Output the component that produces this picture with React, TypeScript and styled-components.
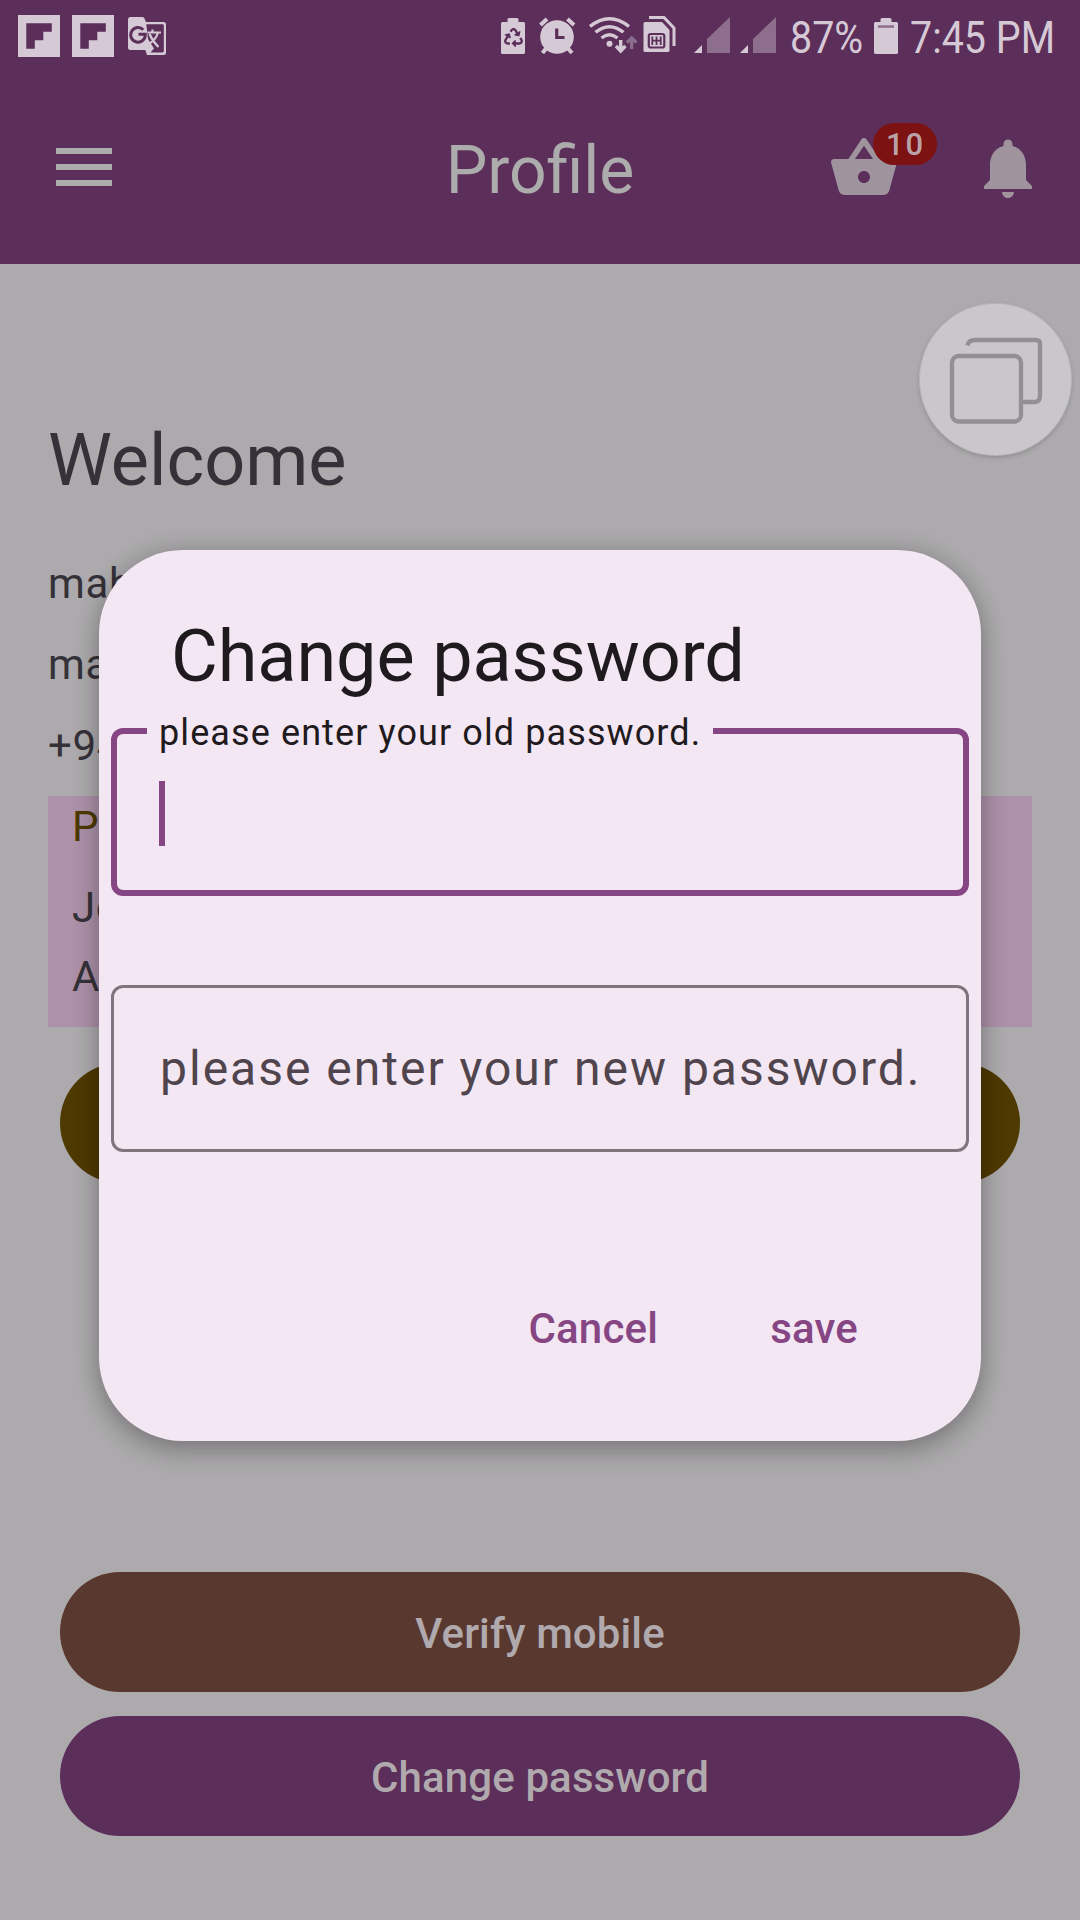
import React from 'react';
import styled, { createGlobalStyle } from 'styled-components';
import { FaRecycle } from 'react-icons/fa';

const color = {
  bar: '#5c2e5a',
  page: '#acaaac',
  status: '#d6c9d6',
  faint: '#8e6e8d',
  icon: '#9f949e',
  ink: '#353138',
  primary: '#864583',
  dialog: '#f3e7f3',
};

const Global = createGlobalStyle`
  * { box-sizing: border-box; }
  body { margin: 0; background: ${color.page}; font-family: Roboto, 'Liberation Sans', sans-serif; }
  button { font-family: inherit; }
`;

const Screen = styled.div`
  position: relative;
  display: flex;
  flex-direction: column;
  width: 1080px;
  height: 1920px;
  overflow: hidden;
  background: ${color.page};
`;

const Header = styled.header`
  height: 264px;
  flex: none;
  background: ${color.bar};
`;

const StatusBar = styled.div`
  display: flex;
  justify-content: space-between;
  height: 72px;
  padding: 0 18px;
  color: ${color.status};
`;

const StatusGroup = styled.div`
  display: flex;
  align-items: flex-start;
`;

const Glyph = styled.svg<{ $before?: number }>`
  display: block;
  flex: none;
  height: 72px;
  margin-left: ${(p) => p.$before ?? 0}px;
`;

const StatusText = styled.span<{ $width: number; $before: number }>`
  width: ${(p) => p.$width}px;
  margin-left: ${(p) => p.$before}px;
  font-size: 45px;
  line-height: 75px;
  white-space: nowrap;
  transform: scaleX(0.876);
  transform-origin: left;
`;

const RecycleBattery = styled.div`
  display: grid;
  place-items: center;
  width: 24px;
  height: 72px;
  & > * { grid-area: 1 / 1; }
  & > .mark { color: ${color.bar}; margin-top: 3px; }
`;

const Toolbar = styled.div`
  display: grid;
  grid-template-columns: 1fr auto 1fr;
  align-items: center;
  height: 192px;
  padding: 0 36px 0 56px;
`;

const MenuButton = styled.div`
  display: flex;
  flex-direction: column;
  gap: 10px;
  width: 56px;
  margin-bottom: 2px;
`;

const MenuLine = styled.span`
  height: 6px;
  background: #acacac;
`;

const Title = styled.h1`
  margin: 6px 0 0 -20px;
  font-size: 66px;
  font-weight: 400;
  line-height: 84px;
  color: #acacac;
`;

const Actions = styled.div`
  display: flex;
  justify-content: flex-end;
  gap: 72px;
`;

const IconWrap = styled.div`
  position: relative;
  width: 72px;
  height: 72px;
`;

const Icon = styled.svg`
  display: block;
  width: 72px;
  height: 72px;
  fill: ${color.icon};
`;

const Badge = styled.span`
  position: absolute;
  left: 45px;
  top: -9px;
  width: 64px;
  height: 42px;
  border-radius: 21px;
  background: #7d1212;
  color: #b9a3a8;
  font-size: 31px;
  font-weight: 500;
  letter-spacing: 1.8px;
  line-height: 44px;
  text-align: center;
  text-indent: 1px;
`;

const Content = styled.main`
  flex: 1;
  display: flex;
  flex-direction: column;
  padding: 148px 48px 0;
`;

const Welcome = styled.h2`
  margin: 0 0 43px;
  font-size: 72px;
  font-weight: 400;
  line-height: 98px;
  color: ${color.ink};
`;

const Line = styled.p<{ $gap?: number; $tone?: string }>`
  margin: 0 0 ${(p) => p.$gap ?? 19}px;
  font-size: 42px;
  line-height: 62px;
  letter-spacing: 0.6px;
  color: ${(p) => p.$tone ?? color.ink};
`;

const AddressCard = styled.section`
  height: 231px;
  padding: 0 24px;
  background: #ac91a8;
`;

const PillButton = styled.button<{ $bg: string; $before: number }>`
  flex: none;
  height: 120px;
  margin: ${(p) => p.$before}px 12px 0;
  border: 0;
  border-radius: 60px;
  background: ${(p) => p.$bg};
  color: #b0aaae;
  font-size: 42px;
  font-weight: 500;
  letter-spacing: 0.12px;
  line-height: 60px;
  padding: 4px 0 0;
`;

const FloatingButton = styled.div`
  position: absolute;
  left: 920px;
  top: 304px;
  display: grid;
  place-items: center;
  width: 151px;
  height: 151px;
  border-radius: 50%;
  background: #c9c7ca;
  box-shadow: 0 0 0 1px #b8b6b9, 0 2px 5px rgba(0, 0, 0, 0.22);
`;

const Dialog = styled.div`
  position: absolute;
  left: 99px;
  top: 550px;
  display: flex;
  flex-direction: column;
  width: 882px;
  height: 891px;
  padding: 59px 12px 0;
  border-radius: 84px;
  background: ${color.dialog};
  box-shadow: 0 12px 26px rgba(0, 0, 0, 0.2), 0 0 24px rgba(0, 0, 0, 0.16);
`;

const DialogTitle = styled.h2`
  margin: 0 0 0 60px;
  font-size: 72px;
  font-weight: 400;
  line-height: 96px;
  letter-spacing: -0.1px;
  color: #1f1a1e;
`;

const ActiveField = styled.fieldset`
  min-width: 0;
  height: 190px;
  margin: 1px 0 0;
  padding: 25px 42px 0;
  border: 6px solid ${color.primary};
  border-radius: 12px;
`;

const FieldLabel = styled.legend`
  height: 50px;
  margin-left: -12px;
  width: 566px;
  padding: 0 12px;
  font-size: 36px;
  line-height: 54px;
  letter-spacing: 1.1px;
  white-space: nowrap;
  color: #1f1a1e;
`;

const Caret = styled.div`
  width: 6px;
  height: 65px;
  background: ${color.primary};
`;

const EmptyField = styled.div`
  display: flex;
  align-items: center;
  height: 167px;
  margin-top: 89px;
  padding: 0 46px;
  border: 3px solid #80747d;
  border-radius: 12px;
  color: #50444d;
  font-size: 48px;
  letter-spacing: 2px;
  white-space: nowrap;
`;

const DialogActions = styled.div`
  display: flex;
  justify-content: flex-end;
  gap: 112px;
  margin-top: 147px;
  padding-right: 111px;
`;

const TextButton = styled.button`
  border: 0;
  padding: 0;
  background: none;
  color: ${color.primary};
  font-size: 42px;
  font-weight: 500;
  letter-spacing: 0.2px;
  line-height: 60px;
`;

const Flipboard = ({ before }: { before?: number }) => (
  <Glyph $before={before} width="42" viewBox="18 0 42 72">
    <path d="M18 15H60V57H18Z" fill={color.status} />
    <path d="M26.3 23.3H51.8V31.8H43.3V40.3H34.8V48.8H26.3Z" fill={color.bar} />
  </Glyph>
);

const Translate = () => (
  <Glyph $before={14} width="38" viewBox="128 0 38 72">
    <path d="M130.5 17H142.5Q144 17 144.5 18.5L146 22H163.5Q166 22 166 24.5V52.5Q166 55 163.5 55H147L145.3 50H130.5Q128 50 128 47.5V19.5Q128 17 130.5 17Z" fill={color.status} />
    <path d="M146.300 24.3H162.5Q163.8 24.3 163.8 25.6V51Q163.8 52.400 162.5 52.4H150.500L154 48.5L148 39Z" fill={color.bar} />
    <path d="M143.3 29.8A7.3 7.3 0 1 0 145.3 34.3H138.5" fill="none" stroke={color.bar} strokeWidth="3" />
    <path d="M147.500 32.5H161M152.5 29.5V32.5M157.8 33C156.5 37.5 153.5 41 149.5 43.5M149.5 34C151.5 39 155 43.5 158.5 47" fill="none" stroke={color.status} strokeWidth="2.2" />
  </Glyph>
);

const Battery = ({ before, line }: { before?: number; line?: boolean }) => (
  <Glyph $before={before} width="24" viewBox="874 0 24 72">
    <path d="M880.5 22V19.5Q880.5 18 882 18H890Q891.5 18 891.5 19.5V22H896.5Q898 22 898 23.5V52.5Q898 54 896.5 54H875.5Q874 54 874 52.5V23.5Q874 22 875.5 22Z" fill={color.status} />
    {line && <path d="M878 25.3H894V27.8H878Z" fill={color.faint} />}
  </Glyph>
);

const Alarm = () => (
  <Glyph $before={14} width="38" viewBox="539 0 38 72">
    <g fill="none" stroke={color.status} strokeWidth="4">
      <path d="M540.5 25L547 19M574 25L567.5 19M546 48.5L542.5 53M568 48.5L572 53" />
    </g>
    <circle cx="557" cy="37" r="16.8" fill={color.status} />
    <path d="M556.7 28.5V37.5H564.5" fill="none" stroke={color.bar} strokeWidth="3.2" />
  </Glyph>
);

const Wifi = () => (
  <Glyph $before={12} width="49" viewBox="589 0 49 72">
    <g fill="none" stroke={color.status} strokeWidth="3.4">
      <path d="M590 26.5Q609.500 11 629 26.5" />
      <path d="M595.5 32.3Q609.5 21 623.5 32.3" />
      <path d="M601.5 38Q609.5 31.5 617.5 38" />
      <path d="M620.7 40V50.5M616 46L620.7 51L625.4 46" />
    </g>
    <circle cx="609.5" cy="43.8" r="3" fill={color.status} />
    <path d="M631.7 49V39M627 42.5L631.7 38L636.4 42.5" fill="none" stroke={color.faint} strokeWidth="3.2" />
  </Glyph>
);

const Sim = () => (
  <Glyph $before={5} width="34" viewBox="643 0 34 72">
    <path d="M649 17.5H664L674 28V46" fill="none" stroke={color.status} strokeWidth="3" />
    <path d="M645 22H662L669.5 30V50.5Q669.5 52 668 52H645Q643.5 52 643.5 50.5V23.5Q643.5 22 645 22Z" fill={color.status} />
    <rect x="648.8" y="34" width="15.500" height="13.5" rx="2" fill="none" stroke={color.bar} strokeWidth="2.2" />
    <path d="M652.300 36.500V45M656.5 36.500V45M660.700 36.500V45M652 40.7H661" fill="none" stroke={color.bar} strokeWidth="1.8" />
  </Glyph>
);

const Signal = ({ before }: { before: number }) => (
  <Glyph $before={before} width="36" viewBox="694 0 36 72">
    <path d="M694 53L702 45V53Z" fill={color.status} />
    <path d="M707 39L730 17V53H707Z" fill={color.faint} />
  </Glyph>
);

const StatusIcons = () => (
  <StatusBar>
    <StatusGroup>
      <Flipboard />
      <Flipboard before={12} />
      <Translate />
    </StatusGroup>
    <StatusGroup>
      <RecycleBattery>
        <Battery />
        <FaRecycle className="mark" size={19} />
      </RecycleBattery>
      <Alarm />
      <Wifi />
      <Sim />
      <Signal before={17} />
      <Signal before={10} />
      <StatusText $before={14} $width={84}>87%</StatusText>
      <Battery line />
      <StatusText $before={12} $width={152}>7:45 PM</StatusText>
    </StatusGroup>
  </StatusBar>
);

export default function App() {
  return (
    <Screen>
      <Global />
      <Header>
        <StatusIcons />
        <Toolbar>
          <MenuButton>
            <MenuLine />
            <MenuLine />
            <MenuLine />
          </MenuButton>
          <Title>Profile</Title>
          <Actions>
            <IconWrap>
              <Icon viewBox="0 0 24 24">
                <path d="M17.21 9l-4.38-6.56c-.19-.28-.51-.42-.83-.42-.32 0-.64.14-.83.43L6.79 9H2c-.55 0-1 .45-1 1 0 .09.01.18.04.27l2.54 9.27c.23.84 1 1.46 1.92 1.46h13c.92 0 1.69-.62 1.93-1.46l2.54-9.27L23 10c0-.55-.45-1-1-1h-4.79zM9 9l3-4.4L15 9H9zm3 8c-1.1 0-2-.9-2-2s.9-2 2-2 2 .9 2 2-.9 2-2 2z" />
              </Icon>
              <Badge>10</Badge>
            </IconWrap>
            <IconWrap>
              <Icon viewBox="0 0 24 24">
                <path d="M12 22c1.1 0 2-.9 2-2h-4c0 1.1.89 2 2 2zm6-6v-5c0-3.07-1.64-5.64-4.5-6.32V4c0-.83-.67-1.5-1.5-1.5s-1.5.67-1.5 1.5v.68C7.63 5.36 6 7.92 6 11v5l-2 2v1h16v-1l-2-2z" />
              </Icon>
            </IconWrap>
          </Actions>
        </Toolbar>
      </Header>

      <Content>
        <Welcome>Welcome</Welcome>
        <Line>mah</Line>
        <Line>ma</Line>
        <Line>+94</Line>
        <AddressCard>
          <Line $tone="#4e3900">P</Line>
          <Line $gap={7}>Jo</Line>
          <Line $gap={0}>A</Line>
        </AddressCard>
        <PillButton $bg="#4e3900" $before={36} />
        <PillButton $bg="#59382f" $before={389}>Verify mobile</PillButton>
        <PillButton $bg={color.bar} $before={24}>Change password</PillButton>
      </Content>

      <FloatingButton>
        <svg width="94" height="88" viewBox="949 336 94 88" fill="none" stroke="#929093" strokeWidth="4.3">
          <rect x="952" y="356" width="69" height="65.5" rx="6.5" />
          <path d="M967.5 345.5Q968.5 340 975 340H1036Q1040 340 1040 344V395Q1040 402 1035 402H1023" />
        </svg>
      </FloatingButton>

      <Dialog role="dialog">
        <DialogTitle>Change password</DialogTitle>
        <ActiveField>
          <FieldLabel>please enter your old password.</FieldLabel>
          <Caret />
        </ActiveField>
        <EmptyField>please enter your new password.</EmptyField>
        <DialogActions>
          <TextButton>Cancel</TextButton>
          <TextButton>save</TextButton>
        </DialogActions>
      </Dialog>
    </Screen>
  );
}
